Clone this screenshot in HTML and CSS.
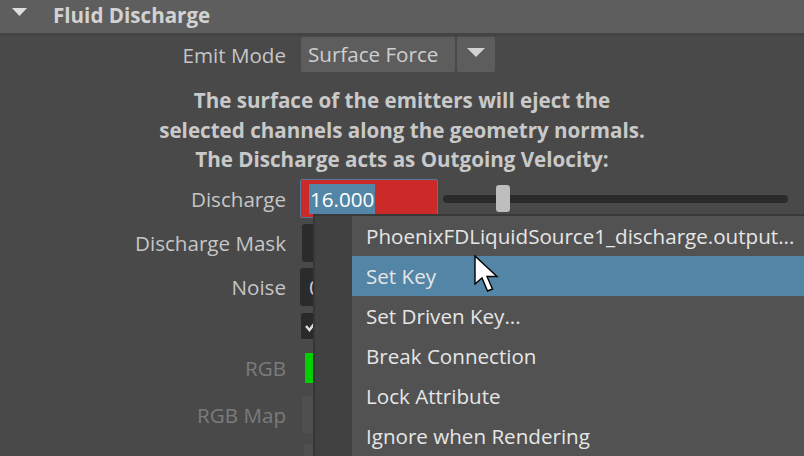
FILE: index.html
```html
<!DOCTYPE html>
<html>
<head>
<meta charset="utf-8">
<link rel="stylesheet" href="styles.css">
</head>
<body>
<div class="panel">
  <div class="header">
    <svg class="tri" width="15" height="8" viewBox="0 0 15 8"><path d="M0 0 H15 L7.5 8 Z" fill="#dedede"/></svg>
    <span class="title">Fluid Discharge</span>
  </div>
  <div class="body">
    <div class="row row-emit">
      <span class="lbl">Emit Mode</span>
      <div class="combo">
        <span class="combo-text">Surface Force</span>
        <span class="combo-btn"><svg width="18" height="9" viewBox="0 0 18 9"><path d="M0 0 H18 L9 9 Z" fill="#d2d2d2"/></svg></span>
      </div>
    </div>
    <p class="desc">The surface of the emitters will eject the<br>selected channels along the geometry normals.<br>The Discharge acts as Outgoing Velocity:</p>
    <div class="row row-discharge">
      <span class="lbl">Discharge</span>
      <div class="field field-keyed"><span class="sel">16.000</span></div>
      <div class="slider"><div class="track"></div><div class="handle"></div></div>
    </div>
    <div class="row row-mask">
      <span class="lbl">Discharge Mask</span>
      <div class="box box-dark box-mask"></div>
    </div>
    <div class="row row-noise">
      <span class="lbl">Noise</span>
      <div class="box box-dark box-noise">0.000</div>
    </div>
    <div class="row row-check">
      <span class="lbl"></span>
      <div class="check"><svg width="26" height="26" viewBox="0 0 26 26"><path d="M5 13 L8.5 17 L13 11" fill="none" stroke="#e0e0e0" stroke-width="2.4"/></svg></div>
    </div>
    <div class="row row-rgb">
      <span class="lbl lbl-dim">RGB</span>
      <div class="swatch"></div>
    </div>
    <div class="row row-rgbmap">
      <span class="lbl lbl-dim">RGB Map</span>
      <div class="box box-dis box-rgbmap"></div>
    </div>
    <div class="row row-last">
      <span class="lbl lbl-dim"></span>
      <div class="box box-dis box-last"></div>
    </div>
  </div>

  <div class="menu">
    <div class="menu-gutter"></div>
    <ul class="menu-items">
      <li class="item">PhoenixFDLiquidSource1_discharge.output...</li>
      <li class="item item-active">Set Key</li>
      <li class="item">Set Driven Key...</li>
      <li class="item">Break Connection</li>
      <li class="item">Lock Attribute</li>
      <li class="item">Ignore when Rendering</li>
    </ul>
  </div>

  <svg class="cursor" width="26" height="40" viewBox="0 0 26 40">
    <path d="M1 1 L1 29 L8 23 L13.5 36 L18.5 34 L13 21.5 L23 21.5 Z" fill="#ffffff" stroke="#000000" stroke-width="1.4" stroke-linejoin="miter"/>
  </svg>
</div>
</body>
</html>
```

FILE: styles.css
```css
html, body {
  margin: 0;
  padding: 0;
  overflow: hidden;
  background: #494949;
}

.panel {
  position: relative;
  width: 804px;
  height: 456px;
  overflow: hidden;
  background: #494949;
  font-family: "Open Sans", "Noto Sans", sans-serif;
  font-size: 20.6px;
  color: #c8c8c8;
}

.header {
  height: 33px;
  background: #5e5e5e;
  border-bottom: 3px solid #444444;
  display: flex;
  align-items: center;
  padding-left: 12px;
  box-sizing: content-box;
}

.tri {
  align-self: flex-start;
  margin-top: 8px;
}

.title {
  margin-left: 26px;
  margin-bottom: 3px;
  font-weight: 700;
  font-size: 20.6px;
  color: #d2d2d2;
}

.body {
  display: flex;
  flex-direction: column;
}

.row {
  display: grid;
  grid-template-columns: 286px auto 1fr;
  column-gap: 14px;
  align-items: center;
}

.lbl {
  text-align: right;
  white-space: nowrap;
  color: #c6c6c6;
}

.lbl-dim {
  color: #7b7b7b;
}

.row-emit {
  margin-top: 1px;
  height: 35px;
}

.combo {
  display: flex;
  gap: 2px;
  height: 35px;
  margin-left: 1px;
}

.combo-text {
  width: 147px;
  padding-left: 7px;
  background: #5d5d5d;
  border-radius: 2px;
  line-height: 35px;
  color: #cfcfcf;
  white-space: nowrap;
}

.combo-btn {
  width: 38px;
  background: #5d5d5d;
  border-radius: 2px;
  display: flex;
  align-items: center;
  justify-content: center;
  padding-bottom: 4px;
  box-sizing: border-box;
}

.desc {
  margin: 14px 0 0;
  text-align: center;
  font-weight: 700;
  font-size: 20.6px;
  line-height: 29.5px;
  color: #c9c9c9;
  height: 89px;
}

.row-discharge {
  margin-top: 4px;
  height: 39px;
  grid-template-columns: 286px 138px 1fr;
}

.field {
  height: 39px;
  box-sizing: border-box;
  border: 1px solid #56789a;
  border-radius: 2px;
  background: #cc2929;
  display: flex;
  align-items: center;
  padding-left: 8px;
}

.sel {
  background: #5285a6;
  color: #ffffff;
  height: 30px;
  line-height: 30px;
  padding: 0 1px;
}

.slider {
  position: relative;
  height: 39px;
  margin-left: -9px;
  margin-right: 16px;
  display: flex;
  align-items: center;
}

.track {
  width: 100%;
  height: 8px;
  border-radius: 4px;
  background: #2b2b2b;
}

.handle {
  position: absolute;
  left: 53px;
  top: 6px;
  width: 14px;
  height: 27px;
  border-radius: 3px;
  background: #bebebe;
}

.box {
  border-radius: 3px;
  width: 140px;
  box-sizing: border-box;
}

.box-dark {
  background: #2b2b2b;
}

.box-dis {
  background: #4f4f4f;
}

.row-mask {
  margin-top: 6px;
  height: 38px;
}

.box-mask {
  height: 38px;
  margin-left: 2px;
}

.row-noise {
  margin-top: 6px;
  height: 38px;
}

.box-noise {
  height: 38px;
  padding-left: 9px;
  line-height: 38px;
  color: #cfcfcf;
}

.row-check {
  margin-top: 7px;
  height: 26px;
}

.check {
  width: 26px;
  height: 26px;
  margin-left: 1px;
  background: #2a2a2a;
  border-radius: 2px;
}

.check svg {
  display: block;
}

.row-rgb {
  margin-top: 10px;
  height: 38px;
}

.swatch {
  width: 80px;
  height: 30px;
  margin-left: 5px;
  background: #00d000;
}

.row-rgbmap {
  margin-top: 9px;
  height: 37px;
}

.box-rgbmap {
  height: 37px;
  margin-left: 2px;
}

.row-last {
  margin-top: 11px;
  height: 37px;
}

.box-last {
  height: 37px;
  margin-left: 4px;
}

.menu {
  position: absolute;
  left: 313px;
  top: 214px;
  width: 500px;
  height: 260px;
  display: flex;
  border-left: 2px solid #363636;
  border-top: 2px solid #393939;
  background: #525252;
}

.menu-gutter {
  width: 37px;
  background: #414141;
  flex: none;
}

.menu-items {
  list-style: none;
  margin: 0;
  padding: 0;
  flex: 1;
}

.item {
  height: 40px;
  line-height: 40px;
  padding-left: 14px;
  color: #e6e6e6;
  white-space: nowrap;
}

.item-active {
  background: #5285a6;
}

.cursor {
  position: absolute;
  left: 474px;
  top: 255px;
}
```
